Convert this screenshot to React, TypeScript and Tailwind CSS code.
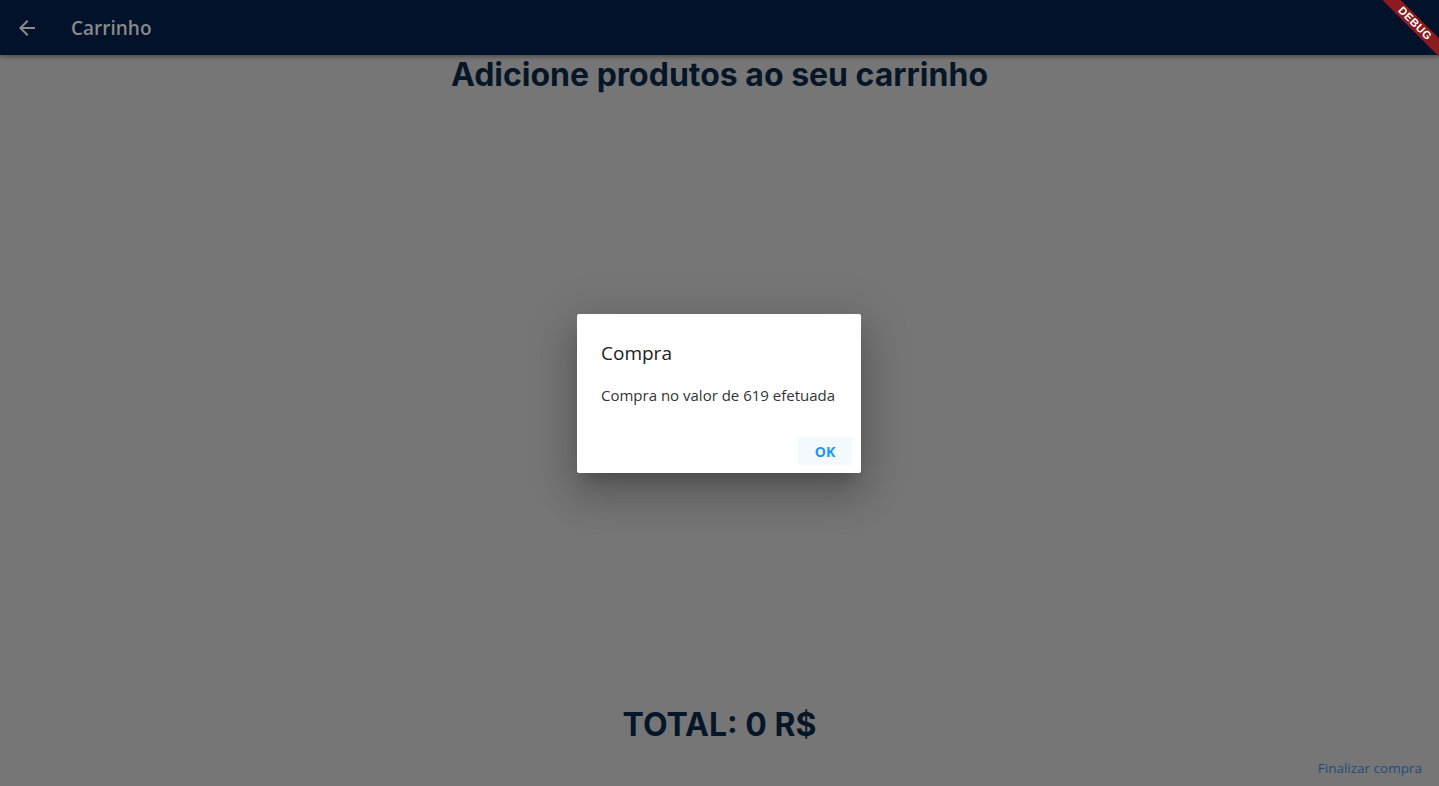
import React from 'react';

const ArrowBack = () => (
  <svg width="24" height="24" viewBox="0 0 24 24" fill="currentColor">
    <path d="M20 11H7.83l5.59-5.59L12 4l-8 8 8 8 1.41-1.41L7.83 13H20v-2z" />
  </svg>
);

export default function App() {
  return (
    <div className="relative h-[786px] w-full overflow-hidden bg-[#767676]">
      {/* app bar */}
      <div className="relative z-10 flex h-[55px] items-center bg-[#01122a] pl-[15px] shadow-[0_2px_4px_rgba(0,0,0,0.35)]">
        <span className="text-[#8a8a8a]">
          <ArrowBack />
        </span>
        <span
          className="ml-[32px] mt-[2px] text-[19px] font-semibold text-[#8a8a8a]"
          style={{ fontFamily: '"Open Sans", "Noto Sans", sans-serif' }}
        >
          Carrinho
        </span>
      </div>

      {/* debug banner */}
      <div className="absolute right-[-34px] top-[17px] z-20 flex h-[13px] w-[116px] rotate-45 items-center justify-center bg-[#8a1b1e]">
        <span
          className="text-[11px] font-black leading-none tracking-[0.5px] text-white"
          style={{ fontFamily: '"Liberation Sans", Arial, sans-serif' }}
        >
          DEBUG
        </span>
      </div>

      {/* body */}
      <div
        className="flex h-[731px] flex-col items-center"
        style={{ fontFamily: 'Inter, "Liberation Sans", sans-serif' }}
      >
        <h1 className="mt-[1px] text-[32px] font-bold leading-[38px] text-[#061629]">
          Adicione produtos ao seu carrinho
        </h1>
        <div className="flex-1" />
        <div className="mb-[13px] text-[32px] font-bold leading-[40px] text-[#061629]">
          TOTAL: 0 R$
        </div>
        <div className="flex w-full justify-end pb-[8px] pr-[17px]">
          <span
            className="text-[13.5px] font-medium text-[#1e4d7c]"
            style={{ fontFamily: '"Open Sans", "Noto Sans", sans-serif' }}
          >
            Finalizar compra
          </span>
        </div>
      </div>

      {/* dialog */}
      <div className="absolute left-[577px] top-[314px] z-30 w-[284px] rounded-[2px] bg-white shadow-[0_11px_15px_-7px_rgba(0,0,0,0.2),0_24px_38px_3px_rgba(0,0,0,0.14),0_9px_46px_8px_rgba(0,0,0,0.12)]">
        <div
          className="px-[24px] pt-[27px]"
          style={{ fontFamily: '"Open Sans", "Noto Sans", sans-serif' }}
        >
          <div className="text-[19px] font-medium leading-[24px] text-[#222]">Compra</div>
          <div className="mt-[20px] text-[15px] leading-[21px] text-[#333]">
            Compra no valor de 619 efetuada
          </div>
        </div>
        <div className="flex justify-end px-[9px] pb-[8px] pt-[31px]">
          <button
            className="h-[28px] w-[54px] rounded-[2px] bg-[#f3f9fe] text-[14px] font-bold text-[#2196f3]"
            style={{ fontFamily: '"Open Sans", "Noto Sans", sans-serif' }}
          >
            OK
          </button>
        </div>
      </div>
    </div>
  );
}
